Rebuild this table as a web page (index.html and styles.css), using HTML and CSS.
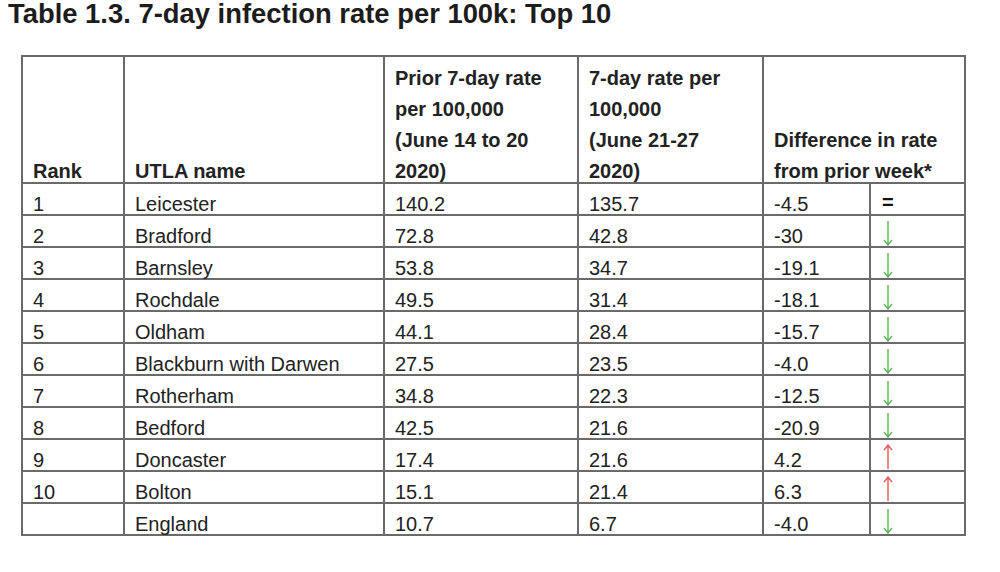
FILE: index.html
```html
<!DOCTYPE html>
<html>
<head>
<meta charset="utf-8">
<link rel="stylesheet" href="styles.css">
</head>
<body>
<h1 class="title">Table 1.3. 7-day infection rate per 100k: Top 10</h1>
<table class="rates">
  <colgroup>
    <col class="c-rank"><col class="c-name"><col class="c-prior"><col class="c-now"><col class="c-diff"><col class="c-arrow">
  </colgroup>
  <thead>
    <tr>
      <th><div class="hd">Rank</div></th>
      <th><div class="hd">UTLA name</div></th>
      <th><div class="hd">Prior 7-day rate<br>per 100,000<br>(June 14 to 20<br>2020)</div></th>
      <th><div class="hd">7-day rate per<br>100,000<br>(June 21-27<br>2020)</div></th>
      <th colspan="2"><div class="hd">Difference in rate<br>from prior week*</div></th>
    </tr>
  </thead>
  <tbody>
    <tr><td>1</td><td>Leicester</td><td>140.2</td><td>135.7</td><td>-4.5</td><td class="ind"><span class="eq">=</span></td></tr>
    <tr><td>2</td><td>Bradford</td><td>72.8</td><td>42.8</td><td>-30</td><td class="ind"><svg class="arr down" viewBox="0 0 12 26"><path d="M6 1V25M2 20L6 25L10 20"/></svg></td></tr>
    <tr><td>3</td><td>Barnsley</td><td>53.8</td><td>34.7</td><td>-19.1</td><td class="ind"><svg class="arr down" viewBox="0 0 12 26"><path d="M6 1V25M2 20L6 25L10 20"/></svg></td></tr>
    <tr><td>4</td><td>Rochdale</td><td>49.5</td><td>31.4</td><td>-18.1</td><td class="ind"><svg class="arr down" viewBox="0 0 12 26"><path d="M6 1V25M2 20L6 25L10 20"/></svg></td></tr>
    <tr><td>5</td><td>Oldham</td><td>44.1</td><td>28.4</td><td>-15.7</td><td class="ind"><svg class="arr down" viewBox="0 0 12 26"><path d="M6 1V25M2 20L6 25L10 20"/></svg></td></tr>
    <tr><td>6</td><td>Blackburn with Darwen</td><td>27.5</td><td>23.5</td><td>-4.0</td><td class="ind"><svg class="arr down" viewBox="0 0 12 26"><path d="M6 1V25M2 20L6 25L10 20"/></svg></td></tr>
    <tr><td>7</td><td>Rotherham</td><td>34.8</td><td>22.3</td><td>-12.5</td><td class="ind"><svg class="arr down" viewBox="0 0 12 26"><path d="M6 1V25M2 20L6 25L10 20"/></svg></td></tr>
    <tr><td>8</td><td>Bedford</td><td>42.5</td><td>21.6</td><td>-20.9</td><td class="ind"><svg class="arr down" viewBox="0 0 12 26"><path d="M6 1V25M2 20L6 25L10 20"/></svg></td></tr>
    <tr><td>9</td><td>Doncaster</td><td>17.4</td><td>21.6</td><td>4.2</td><td class="ind"><svg class="arr up" viewBox="0 0 12 26"><path d="M6 25V1M2 6L6 1L10 6"/></svg></td></tr>
    <tr><td>10</td><td>Bolton</td><td>15.1</td><td>21.4</td><td>6.3</td><td class="ind"><svg class="arr up" viewBox="0 0 12 26"><path d="M6 25V1M2 6L6 1L10 6"/></svg></td></tr>
    <tr><td></td><td>England</td><td>10.7</td><td>6.7</td><td>-4.0</td><td class="ind"><svg class="arr down" viewBox="0 0 12 26"><path d="M6 1V25M2 20L6 25L10 20"/></svg></td></tr>
  </tbody>
</table>
</body>
</html>
```

FILE: styles.css
```css
html, body {
  margin: 0;
  padding: 0;
  background: #ffffff;
}
body {
  font-family: "Liberation Sans", Arial, sans-serif;
  color: #222222;
  padding: 0 0 0 8px;
}
.title {
  margin: 0;
  font-size: 27.4px;
  line-height: 28px;
  font-weight: bold;
  color: #1c1c1c;
}
.rates {
  margin: 27px 0 0 13px;
  border-collapse: collapse;
  table-layout: fixed;
  width: 943px;
  font-size: 20px;
}
.c-rank { width: 102px; }
.c-name { width: 260px; }
.c-prior { width: 194px; }
.c-now { width: 185px; }
.c-diff { width: 107px; }
.c-arrow { width: 95px; }
.rates th, .rates td {
  border: 2px solid #6a6a6a;
  text-align: left;
  padding: 0 0 0 10px;
  white-space: nowrap;
}
.rates th {
  height: 127px;
  box-sizing: border-box;
  vertical-align: bottom;
  font-weight: bold;
  line-height: 31px;
}
.hd {
  margin-bottom: -5px;
}
.rates td {
  height: 32px;
  box-sizing: border-box;
  line-height: 20px;
  padding-top: 10px;
  vertical-align: top;
}
.rates td.ind {
  padding: 0 0 0 11px;
  vertical-align: top;
}
.eq {
  display: block;
  font-weight: bold;
  font-size: 20px;
  line-height: 20px;
  padding-top: 8px;
  color: #111;
}
.arr {
  display: block;
  width: 12px;
  height: 26px;
  margin-top: 4px;
  fill: none;
  stroke-width: 1.4;
}
.arr.down { stroke: #5cb85c; }
.arr.up { stroke: #e05a5a; }
```
